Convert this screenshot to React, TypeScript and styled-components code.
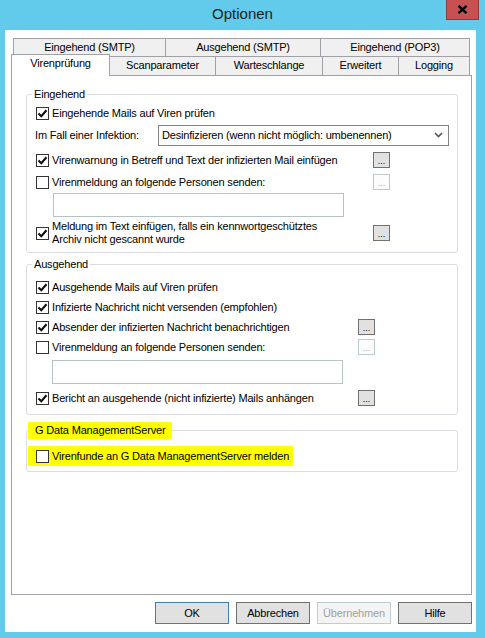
import React from "react";
import styled, { createGlobalStyle } from "styled-components";

const GlobalStyle = createGlobalStyle`
  html, body {
    margin: 0;
    padding: 0;
  }
  body {
    background: #62cbeb;
    font-family: "Liberation Sans", Arial, sans-serif;
    font-size: 11px;
    letter-spacing: -0.18px;
    color: #000;
  }
`;

const Window = styled.div`
  width: 485px;
  height: 638px;
  background: #62cbeb;
`;

const TitleBar = styled.div`
  height: 30px;
  display: grid;
  grid-template-columns: 1fr auto 1fr;
  align-items: start;
`;

const Title = styled.div`
  grid-column: 2;
  font-size: 15px;
  letter-spacing: 0;
  line-height: 28px;
  color: #1b1b1b;
`;

const CloseButton = styled.div`
  grid-column: 3;
  justify-self: end;
  margin-right: 6px;
  width: 33px;
  height: 20px;
  box-sizing: border-box;
  background: #c75050;
  border: 1px solid #8f3b3b;
  border-top: none;
  display: flex;
  align-items: center;
  justify-content: center;
`;

const Client = styled.div`
  margin-left: 5px;
  width: 471px;
  height: 602px;
  box-sizing: border-box;
  padding-top: 8px;
  background: #fff;
`;

const TabStrip = styled.div<{ $indent: number; $h: number }>`
  display: flex;
  align-items: flex-end;
  height: ${p => p.$h}px;
  margin-left: ${p => p.$indent}px;
`;

const Tab = styled.div<{ $w: number; $h: number; $active?: boolean }>`
  position: relative;
  z-index: ${p => (p.$active ? 2 : 1)};
  box-sizing: border-box;
  width: ${p => p.$w}px;
  height: ${p => p.$h}px;
  margin-right: -1px;
  margin-bottom: ${p => (p.$active ? -1 : 0)}px;
  border: 1px solid #a0a0a6;
  border-bottom: none;
  background: ${p => (p.$active ? "#fff" : "#f0f0f0")};
  text-align: center;
  line-height: ${p => (p.$active ? 16 : 17)}px;
  white-space: nowrap;
`;

const Panel = styled.div`
  margin-left: 6px;
  width: 461px;
  height: 520px;
  box-sizing: border-box;
  border: 1px solid #a0a0a6;
  padding: 11px 13px 0 14px;
`;

const Group = styled.fieldset<{ $top: number; $bottom: number }>`
  margin: ${p => p.$top}px 0 0;
  padding: 0 8px ${p => p.$bottom}px 9px;
  border: 1px solid #dcdce2;
  border-radius: 3px;
  min-inline-size: 0;
`;

const Legend = styled.legend<{ $mark?: boolean }>`
  line-height: 14px;
  padding: ${p => (p.$mark ? "1px 7px 2px 7px" : "0 2px")};
  margin-left: ${p => (p.$mark ? -8 : -4)}px;
  background: ${p => (p.$mark ? "#ffff00" : "transparent")};
`;

const Row = styled.div<{ $h: number; $mt?: number; $btnX: number }>`
  display: grid;
  grid-template-columns: ${p => p.$btnX}px 17px;
  align-items: center;
  height: ${p => p.$h}px;
  margin-top: ${p => p.$mt ?? 0}px;
`;

const SelectRow = styled.div`
  display: flex;
  align-items: center;
  height: 22px;
  white-space: nowrap;
`;

const CheckLabel = styled.label`
  display: flex;
  align-items: center;
  gap: 3px;
  white-space: nowrap;
  line-height: 13px;
`;

const Box = styled.span`
  flex: none;
  width: 13px;
  height: 13px;
  box-sizing: border-box;
  border: 1px solid #333;
  background: #fff;
  display: flex;
  align-items: center;
  justify-content: center;
`;

const Marked = styled.div`
  display: flex;
  align-items: center;
  height: 20px;
  margin-left: -8px;
  padding: 0 4px 0 8px;
  background: #ffff00;
  justify-self: start;
`;

const FieldLabel = styled.span`
  flex: none;
  width: 123px;
  margin-left: -1px;
`;

const Combo = styled.div`
  flex: none;
  width: 291px;
  height: 21px;
  box-sizing: border-box;
  border: 1px solid #828282;
  background: #fff;
  display: flex;
  align-items: center;
  justify-content: space-between;
  padding: 0 5px 0 3px;
`;

const TextField = styled.div<{ $indent: number; $mt?: number }>`
  width: 291px;
  height: 24px;
  box-sizing: border-box;
  margin-left: ${p => p.$indent}px;
  margin-top: ${p => p.$mt ?? 0}px;
  border: 1px solid #b7c2c2;
  background: #fff;
`;

const DotsButton = styled.div<{ $disabled?: boolean }>`
  width: 17px;
  height: 16px;
  box-sizing: border-box;
  border: 1px solid ${p => (p.$disabled ? "#bfcaca" : "#707070")};
  background: ${p => (p.$disabled ? "#fcfcfc" : "#e1e1e1")};
  color: ${p => (p.$disabled ? "#a8a8a8" : "#000")};
  display: flex;
  align-items: flex-end;
  justify-content: center;
  font-size: 9px;
  line-height: 11px;
  letter-spacing: 0;
`;

const ButtonBar = styled.div`
  display: flex;
  justify-content: flex-end;
  gap: 7px;
  margin-top: 7px;
  padding-right: 4px;
`;

const DialogButton = styled.div<{ $default?: boolean; $disabled?: boolean }>`
  width: 74px;
  height: 22px;
  box-sizing: border-box;
  border: 1px solid
    ${p => (p.$default ? "#3c7fb1" : p.$disabled ? "#bfcdcd" : "#707070")};
  background: ${p => (p.$disabled ? "#f4f4f4" : "#e1e1e1")};
  color: ${p => (p.$disabled ? "#a0a0a0" : "#000")};
  display: flex;
  align-items: center;
  justify-content: center;
`;

function CheckBox({ checked }: { checked?: boolean }) {
  return (
    <Box>
      {checked && (
        <svg width="11" height="11" viewBox="0 0 11 11">
          <path d="M1.5 5.5 L4.3 8.3 L9.5 2.2" fill="none" stroke="#111" strokeWidth="2.1" />
        </svg>
      )}
    </Box>
  );
}

function Check({ checked, children }: { checked?: boolean; children: React.ReactNode }) {
  return (
    <CheckLabel>
      <CheckBox checked={checked} />
      <span>{children}</span>
    </CheckLabel>
  );
}

export default function App() {
  return (
    <Window>
      <GlobalStyle />
      <TitleBar>
        <Title>Optionen</Title>
        <CloseButton>
          <svg width="11" height="9" viewBox="0 0 11 9">
            <path d="M1.5 0.8 L9.5 8.2 M9.5 0.8 L1.5 8.2" stroke="#000" strokeWidth="2.4" />
          </svg>
        </CloseButton>
      </TitleBar>
      <Client>
        <TabStrip $indent={8} $h={18}>
          <Tab $w={153} $h={18}>Eingehend (SMTP)</Tab>
          <Tab $w={156} $h={18}>Ausgehend (SMTP)</Tab>
          <Tab $w={150} $h={18}>Eingehend (POP3)</Tab>
        </TabStrip>
        <TabStrip $indent={6} $h={19}>
          <Tab $w={99} $h={22} $active>Virenprüfung</Tab>
          <Tab $w={107} $h={19}>Scanparameter</Tab>
          <Tab $w={108} $h={19}>Warteschlange</Tab>
          <Tab $w={77} $h={19}>Erweitert</Tab>
          <Tab $w={72} $h={19}>Logging</Tab>
        </TabStrip>
        <Panel>
          <Group $top={0} $bottom={3}>
            <Legend>Eingehend</Legend>
            <Row $h={22} $mt={1} $btnX={337}>
              <Check checked>Eingehende Mails auf Viren prüfen</Check>
            </Row>
            <SelectRow>
              <FieldLabel>Im Fall einer Infektion:</FieldLabel>
              <Combo>
                <span>Desinfizieren (wenn nicht möglich: umbenennen)</span>
                <svg width="9" height="6" viewBox="0 0 9 6">
                  <path d="M1 1 L4.5 4.5 L8 1" fill="none" stroke="#555" strokeWidth="1.6" />
                </svg>
              </Combo>
            </SelectRow>
            <Row $h={22} $mt={3} $btnX={337}>
              <Check checked>Virenwarnung in Betreff und Text der infizierten Mail einfügen</Check>
              <DotsButton>...</DotsButton>
            </Row>
            <Row $h={22} $btnX={337}>
              <Check>Virenmeldung an folgende Personen senden:</Check>
              <DotsButton $disabled>...</DotsButton>
            </Row>
            <TextField $indent={17} />
            <Row $h={32} $btnX={337}>
              <Check checked>
                Meldung im Text einfügen, falls ein kennwortgeschütztes
                <br />
                Archiv nicht gescannt wurde
              </Check>
              <DotsButton>...</DotsButton>
            </Row>
          </Group>

          <Group $top={4} $bottom={6}>
            <Legend>Ausgehend</Legend>
            <Row $h={20} $mt={6} $btnX={322}>
              <Check checked>Ausgehende Mails auf Viren prüfen</Check>
            </Row>
            <Row $h={20} $btnX={322}>
              <Check checked>Infizierte Nachricht nicht versenden (empfohlen)</Check>
            </Row>
            <Row $h={20} $btnX={322}>
              <Check checked>Absender der infizierten Nachricht benachrichtigen</Check>
              <DotsButton>...</DotsButton>
            </Row>
            <Row $h={20} $btnX={322}>
              <Check>Virenmeldung an folgende Personen senden:</Check>
              <DotsButton $disabled>...</DotsButton>
            </Row>
            <TextField $indent={16} $mt={3} />
            <Row $h={20} $mt={4} $btnX={322}>
              <Check checked>Bericht an ausgehende (nicht infizierte) Mails anhängen</Check>
              <DotsButton>...</DotsButton>
            </Row>
          </Group>

          <Group $top={7} $bottom={5}>
            <Legend $mark>G Data ManagementServer</Legend>
            <Row $h={20} $mt={7} $btnX={322}>
              <Marked>
                <Check>Virenfunde an G Data ManagementServer melden</Check>
              </Marked>
            </Row>
          </Group>
        </Panel>
        <ButtonBar>
          <DialogButton $default>OK</DialogButton>
          <DialogButton>Abbrechen</DialogButton>
          <DialogButton $disabled>Übernehmen</DialogButton>
          <DialogButton>Hilfe</DialogButton>
        </ButtonBar>
      </Client>
    </Window>
  );
}
